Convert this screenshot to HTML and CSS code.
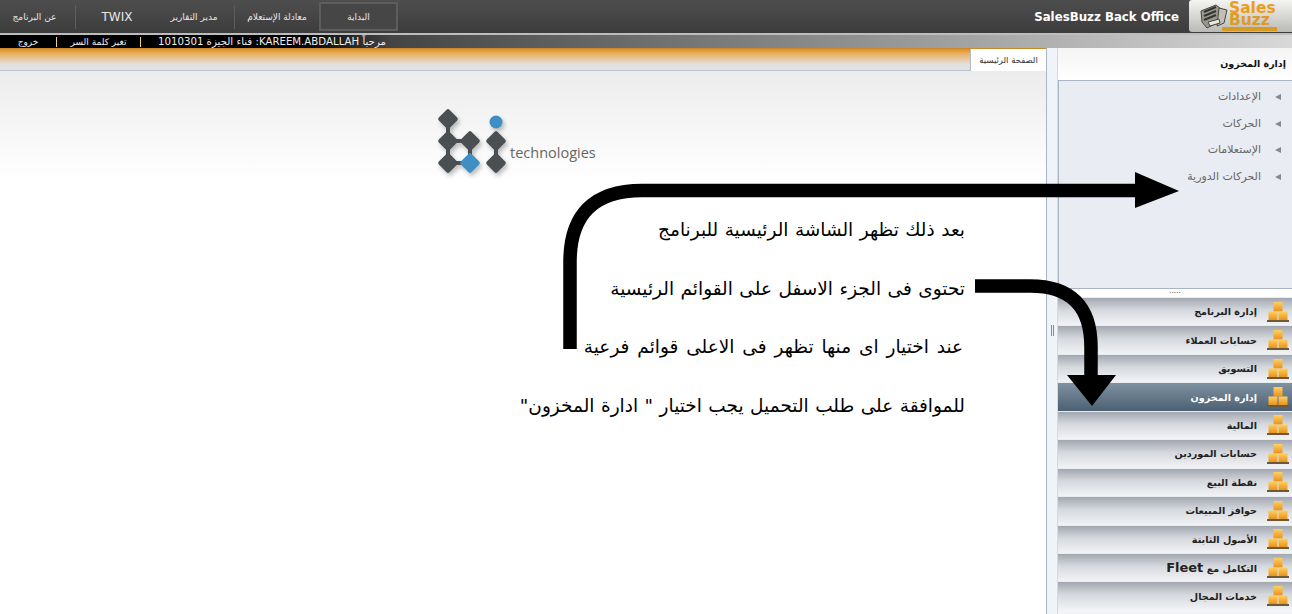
FILE: index.html
```html
<!DOCTYPE html>
<html lang="ar">
<head>
  <meta charset="UTF-8">
  <title>SalesBuzz Back Office</title>
  <link rel="stylesheet" href="styles.css">
</head>
<body>

  <svg class="defs" width="0" height="0">
    <defs>
      <linearGradient id="box" x1="0" y1="0" x2="0" y2="1">
        <stop offset="0" stop-color="#ffd060"/>
        <stop offset="1" stop-color="#e8921c"/>
      </linearGradient>
      <symbol id="stack" viewBox="0 0 22 22">
        <rect x="6.500" y="1" width="9" height="9.500" fill="url(#box)"/>
        <rect x="1.500" y="10.500" width="9" height="8.500" fill="url(#box)"/>
        <rect x="11.500" y="10.500" width="9" height="8.500" fill="url(#box)"/>
        <rect x="0" y="19" width="22" height="2" fill="#6b5a3a"/>
      </symbol>
    </defs>
  </svg>

  <header class="topbar">
    <nav class="topnav">
      <a class="nav-item">عن البرنامج</a>
      <a class="nav-item nav-latin">TWIX</a>
      <a class="nav-item">مدير التقارير</a>
      <a class="nav-item">معادلة الإستعلام</a>
      <a class="nav-item nav-active">البداية</a>
    </nav>
    <div class="brand">
      <span class="brand-title">SalesBuzz Back Office</span>
      <div class="brand-logo">
        <svg class="brand-mark" viewBox="0 0 30 26" width="30" height="26">
          <path d="M2 8l15-6 5 4-2 13-12 6-5-6z" fill="#9a988e" stroke="#45453f"/>
          <path d="M5 9l12-5M5 13l12-5M5 17l12-5" stroke="#33332f" stroke-width="2"/>
          <path d="M20 5l8 2-3 13-7 3z" fill="#c2c0b6" stroke="#45453f"/>
          <path d="M9 19l11-3 1 4-10 3z" fill="#e6e5df" stroke="#45453f"/>
        </svg>
        <div class="brand-words">
          <span>Sales</span>
          <span class="brand-buzz">Buzz</span>
          <i class="brand-strip"></i>
        </div>
      </div>
    </div>
  </header>

  <div class="userbar">
    <a>خروج</a>
    <a>تغير كلمة السر</a>
    <span class="user-name">مرحباً KAREEM.ABDALLAH: فناء الجيزة 1010301</span>
  </div>

  <main class="layout">
    <section class="content">
      <div class="tabstrip">
        <div class="tab">الصفحة الرئيسية</div>
      </div>
      <div class="page">
        <div class="bi-logo">
          <svg class="bi-mark" viewBox="0 0 74 72" width="74" height="72">
            <path d="M13 13V57H35V35H13M61 35V57" fill="none" stroke="#4a4f52" stroke-width="4"/>
            <g fill="#4a4f52">
              <rect x="5.500" y="5.500" width="15" height="15" rx="2" transform="rotate(45 13 13)"/>
              <rect x="5.500" y="27.500" width="15" height="15" rx="2" transform="rotate(45 13 35)"/>
              <rect x="5.500" y="49.500" width="15" height="15" rx="2" transform="rotate(45 13 57)"/>
              <rect x="27.500" y="27.500" width="15" height="15" rx="2" transform="rotate(45 35 35)"/>
              <rect x="53.500" y="27.500" width="15" height="15" rx="2" transform="rotate(45 61 35)"/>
              <rect x="53.500" y="49.500" width="15" height="15" rx="2" transform="rotate(45 61 57)"/>
            </g>
            <rect x="27.500" y="49.500" width="15" height="15" rx="2" fill="#3f8fc4" transform="rotate(45 35 57)"/>
            <circle cx="61" cy="16" r="6.500" fill="#3f8fc4"/>
          </svg>
          <span class="bi-word">technologies</span>
        </div>
        <div class="intro">
          <p>بعد ذلك تظهر الشاشة الرئيسية للبرنامج</p>
          <p>تحتوى فى الجزء الاسفل على القوائم الرئيسية</p>
          <p class="intro-wide">عند اختيار اى منها تظهر فى الاعلى قوائم فرعية</p>
          <p>للموافقة على طلب التحميل يجب اختيار " ادارة المخزون"</p>
        </div>
      </div>
    </section>

    <div class="split"><span class="split-grip"></span></div>

    <aside class="sidebar">
      <h4 class="side-title">إدارة المخزون</h4>
      <ul class="submenu">
        <li>الإعدادات</li>
        <li>الحركات</li>
        <li>الإستعلامات</li>
        <li>الحركات الدورية</li>
      </ul>
      <div class="dots">•••••</div>
      <ul class="modules">
        <li><svg><use href="#stack"/></svg><span>إدارة البرنامج</span></li>
        <li><svg><use href="#stack"/></svg><span>حسابات العملاء</span></li>
        <li><svg><use href="#stack"/></svg><span>التسويق</span></li>
        <li class="selected"><svg><use href="#stack"/></svg><span>إدارة المخزون</span></li>
        <li><svg><use href="#stack"/></svg><span>المالية</span></li>
        <li><svg><use href="#stack"/></svg><span>حسابات الموردين</span></li>
        <li><svg><use href="#stack"/></svg><span>نقطة البيع</span></li>
        <li><svg><use href="#stack"/></svg><span>حوافز المبيعات</span></li>
        <li><svg><use href="#stack"/></svg><span>الأصول الثابتة</span></li>
        <li><svg><use href="#stack"/></svg><span>التكامل مع <b>Fleet</b></span></li>
        <li><svg><use href="#stack"/></svg><span>خدمات المجال</span></li>
      </ul>
    </aside>
  </main>

  <!-- annotation arrows drawn over the screenshot -->
  <svg class="arrows" width="1292" height="614" viewBox="0 0 1292 614">
    <path d="M570 349V262Q570 190.500 642 190.500H1140" fill="none" stroke="#000" stroke-width="13.500"/>
    <path d="M1135 172L1179 191L1135 208Z" fill="#000"/>
    <path d="M975 286H1030Q1091 286 1091 347V380" fill="none" stroke="#000" stroke-width="13.500"/>
    <path d="M1067 375H1116L1092 406Z" fill="#000"/>
  </svg>

</body>
</html>
```

FILE: styles.css
```css
* { box-sizing: border-box; }
html, body { margin: 0; height: 614px; overflow: hidden; }
body { font-family: "DejaVu Sans", sans-serif; background: #fff; position: relative; }
ul { list-style: none; margin: 0; padding: 0; }
.defs { position: absolute; }

.topbar { height: 33px; display: flex; justify-content: space-between; background: linear-gradient(#4e4e4e, #3c3c3c); color: #fff; }
.topnav { display: flex; align-items: center; }
.nav-item { font-size: 9px; color: #e6e6e6; height: 24px; line-height: 24px; text-align: center; border-right: 1px solid #5e5e5e; white-space: nowrap; direction: rtl; width: 77px; }
.nav-item:first-child { width: 76px; padding-right: 6px; }
.nav-latin { font-size: 12px; line-height: 25px; width: 82px; border-right: 0; }
.nav-item:nth-child(3) { width: 77px; padding-right: 4px; }
.nav-item:nth-child(4) { width: 84px; border-right: 0; }
.nav-active { width: 79px; height: 29px; line-height: 27px; border: 2px solid #5d5d5d; background: #464646; }
.brand { display: flex; align-items: center; }
.brand-title { font-size: 11.8px; font-weight: bold; margin-right: 10px; }
.brand-logo { width: 103px; height: 32px; margin-top: -1px; padding-left: 10px; display: flex; align-items: center; background: linear-gradient(#f4f4f2, #b9b9b5); border-radius: 3px 0 0 3px; }
.brand-mark { flex: none; }
.brand-words { display: flex; flex-direction: column; color: #ec9c1c; font: bold 15.5px/12.5px "DejaVu Sans", sans-serif; }
.brand-buzz { color: #dd9a28; }
.brand-strip { display: block; height: 4px; width: 55px; margin: 0 0 0 -7px; background: #d79a22; }

.userbar { height: 15px; display: flex; align-items: center; font-size: 9px; color: #eee; background: linear-gradient(90deg, #000 0, #000 300px, #444 390px, #a8a8a8 1000px, #d8d8d8 100%); border-top: 2px solid #bdbdbd; }
.userbar a { width: 56px; text-align: center; direction: rtl; white-space: nowrap; }
.userbar a:nth-child(2) { width: 85px; border-left: 1px solid #f0d080; border-right: 1px solid #f0d080; }
.user-name { direction: rtl; margin-left: 17px; font-size: 10.2px; white-space: nowrap; }

.layout { display: flex; height: 566px; background: #f2f4f8; }
.content { width: 1047px; border-right: 1px solid #a9b4c4; display: flex; flex-direction: column; background: #fff; }
.tabstrip { height: 23px; flex: none; display: flex; justify-content: flex-end; background: linear-gradient(#e08c1e 0, #e8b060 22%, #e2e2e2 75%); border-top: 1px solid #c98a2a; border-bottom: 1px solid #b8c4d2; }
.tab { width: 76px; height: 22px; background: #fff; font-size: 8.5px; color: #333; text-align: center; line-height: 22px; direction: rtl; white-space: nowrap; border-left: 1px solid #bbb; }
.page { flex: 1; background: linear-gradient(#ececec 0, #fff 110px); }
.bi-logo { height: 144px; padding: 35px 0 0 435px; display: flex; align-items: flex-start; }
.bi-mark { flex: none; filter: drop-shadow(2px 3px 2px rgba(0,0,0,.25)); }
.bi-word { font-family: "Open Sans", sans-serif; font-size: 14.5px; color: #666; margin: 37px 0 0 1px; }
.intro { padding: 0 81px 0 0; direction: rtl; color: #000; font-size: 18.5px; word-spacing: .6px; }
.intro p { margin: 0; height: 58.5px; line-height: 30px; white-space: nowrap; }
.intro .intro-wide { word-spacing: 2px; padding-right: 2px; }

.split { width: 11px; flex: none; display: flex; align-items: center; justify-content: center; background: #f0f3f8; border-right: 1px solid #d3dae4; }
.split-grip { width: 3px; height: 11px; margin-top: -2px; border-left: 1px solid #888; border-right: 1px solid #888; }

.sidebar { flex: 1; min-width: 0; direction: rtl; }
.side-title { margin: 0; height: 32px; font-size: 9.5px; line-height: 32px; padding-right: 6px; background: linear-gradient(#f4f4f4, #fff); border-bottom: 1px solid #fff; color: #111; }
.submenu { height: 209px; padding: 3px 22px 0 0; background: #e9ecf2; border: 1px solid #a9b4c4; border-right: 0; }
.submenu li { height: 26.5px; line-height: 26.5px; font-size: 11px; color: #666; padding-right: 9px; position: relative; }
.submenu li::before { content: ""; position: absolute; right: -11px; top: 10px; border-style: solid; border-color: transparent #888 transparent transparent; border-width: 3.5px 6px 3.5px 0; }
.dots { height: 8px; line-height: 8px; font-size: 4px; text-align: center; background: #fff; color: #777; }
.modules li { height: 28.45px; display: flex; align-items: center; gap: 10px; padding-right: 3px; font-size: 9.6px; font-weight: bold; color: #222; background: linear-gradient(#a2a7b0, #d5d8dd 45%, #f2f3f5 100%); border-top: 1px solid #e8ebef; white-space: nowrap; }
.modules li b { font-size: 13px; }
.modules svg { width: 22px; height: 22px; flex: none; }
.modules .selected { background: linear-gradient(#7f92a2, #4c6073); color: #fff; }

.arrows { position: absolute; left: 0; top: 0; pointer-events: none; }
```
